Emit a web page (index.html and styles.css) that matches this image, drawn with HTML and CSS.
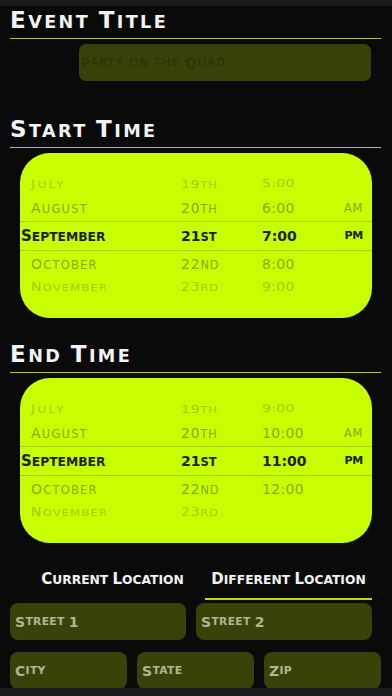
FILE: index.html
```html
<!DOCTYPE html>
<html lang="en">
<head>
<meta charset="utf-8">
<title>New Event</title>
<link rel="stylesheet" href="styles.css">
</head>
<body>
<div class="topbar"></div>
<main class="screen">
  <h2 class="heading"><span class="u">E</span>vent <span class="u">T</span>itle</h2>
  <div class="title-field"><span class="u">P</span>arty on the <span class="u">Q</span>uad</div>

  <h2 class="heading start"><span class="u">S</span>tart <span class="u">T</span>ime</h2>
  <div class="picker">
    <div class="row far top"><span class="cell month"><span class="u">J</span>uly</span><span class="cell day"><span class="u">19</span>th</span><span class="cell time">5:00</span><span class="cell ampm"></span></div>
    <div class="row near"><span class="cell month"><span class="u">A</span>ugust</span><span class="cell day"><span class="u">20</span>th</span><span class="cell time">6:00</span><span class="cell ampm">am</span></div>
    <div class="row sel"><span class="cell month"><span class="u">S</span>eptember</span><span class="cell day"><span class="u">21</span>st</span><span class="cell time">7:00</span><span class="cell ampm">pm</span></div>
    <div class="row near"><span class="cell month"><span class="u">O</span>ctober</span><span class="cell day"><span class="u">22</span>nd</span><span class="cell time">8:00</span><span class="cell ampm"></span></div>
    <div class="row far bottom"><span class="cell month"><span class="u">N</span>ovember</span><span class="cell day"><span class="u">23</span>rd</span><span class="cell time">9:00</span><span class="cell ampm"></span></div>
  </div>

  <h2 class="heading end"><span class="u">E</span>nd <span class="u">T</span>ime</h2>
  <div class="picker">
    <div class="row far top"><span class="cell month"><span class="u">J</span>uly</span><span class="cell day"><span class="u">19</span>th</span><span class="cell time">9:00</span><span class="cell ampm"></span></div>
    <div class="row near"><span class="cell month"><span class="u">A</span>ugust</span><span class="cell day"><span class="u">20</span>th</span><span class="cell time">10:00</span><span class="cell ampm">am</span></div>
    <div class="row sel"><span class="cell month"><span class="u">S</span>eptember</span><span class="cell day"><span class="u">21</span>st</span><span class="cell time">11:00</span><span class="cell ampm">pm</span></div>
    <div class="row near"><span class="cell month"><span class="u">O</span>ctober</span><span class="cell day"><span class="u">22</span>nd</span><span class="cell time">12:00</span><span class="cell ampm"></span></div>
    <div class="row far bottom"><span class="cell month"><span class="u">N</span>ovember</span><span class="cell day"><span class="u">23</span>rd</span><span class="cell time"></span><span class="cell ampm"></span></div>
  </div>

  <div class="tabs">
    <div class="tab"><span class="u">C</span>urrent <span class="u">L</span>ocation</div>
    <div class="tab active"><span class="u">D</span>ifferent <span class="u">L</span>ocation</div>
  </div>

  <div class="fields two">
    <div class="field"><span class="u">S</span>treet <span class="u">1</span></div>
    <div class="field"><span class="u">S</span>treet <span class="u">2</span></div>
  </div>
  <div class="fields three">
    <div class="field"><span class="u">C</span>ity</div>
    <div class="field"><span class="u">S</span>tate</div>
    <div class="field"><span class="u">Z</span>ip</div>
  </div>
</main>
<div class="bottombar"></div>
</body>
</html>
```

FILE: styles.css
```css
html, body {
  margin: 0;
  padding: 0;
  background: #0a0a0a;
}

body {
  width: 392px;
  height: 696px;
  overflow: hidden;
  font-family: "DejaVu Sans", "Liberation Sans", sans-serif;
  text-transform: uppercase;
}

.topbar {
  height: 6px;
  background: #1b1b1b;
}

.bottombar {
  height: 8px;
  background: #1d1d1d;
}

.screen {
  height: 682px;
  overflow: hidden;
}

/* Section headings */
.heading {
  margin: 0 11px 0 10px;
  padding: 0 0 4px 0;
  height: 28px;
  font-size: 17.6px;
  line-height: 28px;
  font-weight: bold;
  letter-spacing: 2.4px;
  color: #f3f3f3;
  border-bottom: 1px solid #b2c24c;
  white-space: nowrap;
}

.heading .u {
  font-size: 23px;
}

.heading.start {
  margin-top: 34px;
}

.heading.end {
  margin-top: 22px;
}

/* Event title input */
.title-field {
  margin: 5px 21px 0 79px;
  height: 37px;
  box-sizing: border-box;
  padding-left: 2px;
  border-radius: 7px;
  background: #384108;
  color: #2a3200;
  font-size: 10.8px;
  letter-spacing: 1.6px;
  display: flex;
  align-items: center;
  white-space: pre;
  overflow: hidden;
}

.title-field .u {
  font-size: 13.5px;
}

/* Date pickers */
.picker {
  margin: 5px 20px 0;
  height: 165px;
  box-sizing: border-box;
  padding-top: 20px;
  border-radius: 30px;
  background: #c8ff00;
  overflow: hidden;
}

.row {
  display: grid;
  grid-template-columns: 150px 81px 1fr auto;
  align-items: center;
  padding: 0 9px 0 11px;
  font-size: 11.5px;
  line-height: 16px;
  color: #8aab00;
  box-sizing: border-box;
}

.row .u {
  font-size: 14px;
}

.row.far {
  color: #a4cc00;
}

.row.far.top {
  height: 22px;
}

.row.far.bottom {
  height: 20px;
}

.row.near {
  height: 26px;
}

.row.sel {
  height: 30px;
  border-top: 1px solid #a7d300;
  border-bottom: 1px solid #a7d300;
  color: #1c2200;
  font-weight: bold;
}

.cell {
  display: block;
  white-space: nowrap;
}

.month {
  letter-spacing: 1.2px;
}

.day {
  letter-spacing: 0.8px;
}

.time {
  font-size: 14px;
  letter-spacing: 0.3px;
}

.ampm {
  letter-spacing: 0.6px;
  text-align: right;
}

.row.far.top .cell {
  transform: scaleY(0.7);
}

.row.far.top .month {
  letter-spacing: 2.6px;
}

.row.far.bottom .cell {
  transform: scaleY(0.82);
}

.row.sel .month {
  margin-left: -10px;
  font-size: 12.3px;
  letter-spacing: 0;
}

.row.sel .month .u {
  font-size: 15px;
}

.row.sel .day {
  letter-spacing: 0;
}

.row.sel .time {
  letter-spacing: 0;
}

.row.sel .ampm {
  font-size: 11px;
  letter-spacing: -0.3px;
}

/* Location tabs */
.tabs {
  display: grid;
  grid-template-columns: 185px 1fr;
  margin: 26px 20px 0;
}

.tab {
  height: 20px;
  text-align: center;
  font-size: 12.3px;
  line-height: 20px;
  font-weight: bold;
  letter-spacing: 0;
  color: #f2f2f2;
  padding-bottom: 9px;
  border-bottom: 2px solid transparent;
  white-space: nowrap;
}

.tab .u {
  font-size: 15px;
}

.tab.active {
  border-bottom-color: #b5e000;
}

/* Address fields */
.fields {
  display: grid;
  gap: 10px;
}

.fields.two {
  grid-template-columns: 1fr 1fr;
  margin: 3px 20px 0 10px;
}

.fields.three {
  grid-template-columns: 1fr 1fr 1fr;
  margin: 12px 11px 0 10px;
}

.field {
  height: 37px;
  box-sizing: border-box;
  padding-left: 5px;
  border-radius: 8px;
  background: #394209;
  color: #b0b592;
  font-size: 10.8px;
  font-weight: bold;
  letter-spacing: 0.3px;
  display: flex;
  align-items: center;
  white-space: pre;
}

.field .u {
  font-size: 14px;
}
```
